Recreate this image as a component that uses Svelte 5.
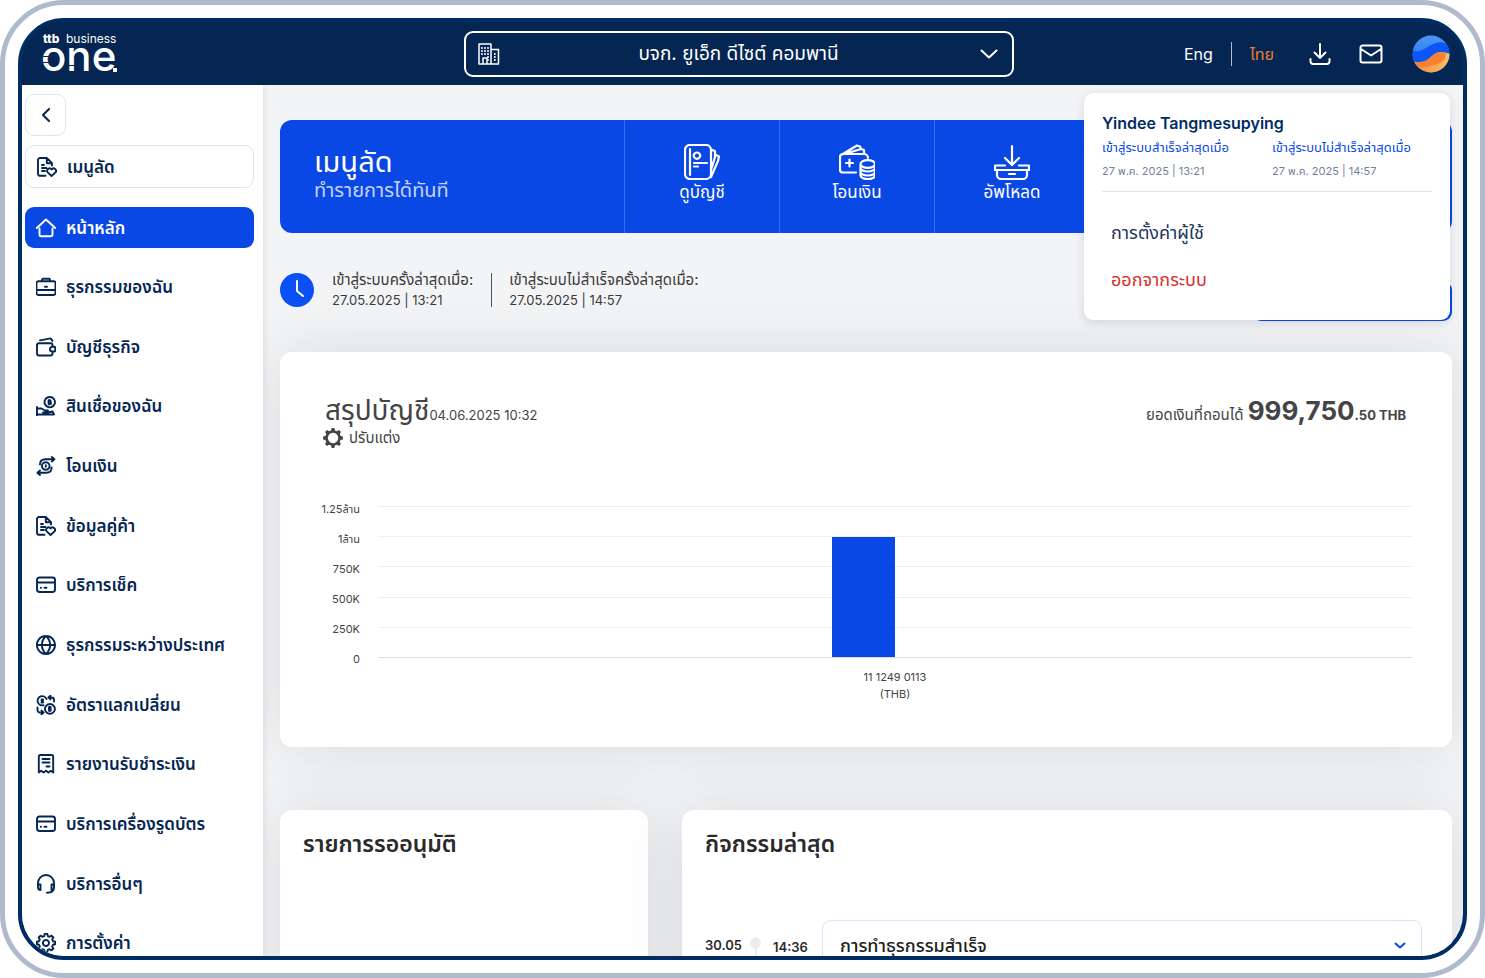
<script lang="ts">
  type MenuItem = { icon: string; label: string };

  // Outline of a cog: alternates between two radii around the centre.
  function cog(c: number, outer: number, inner: number, teeth: number): string {
    const step = (Math.PI * 2) / teeth;
    let d = "";
    for (let i = 0; i < teeth; i++) {
      const a = i * step - Math.PI / 2;
      const points = [
        [a - step * 0.32, inner],
        [a - step * 0.18, outer],
        [a + step * 0.18, outer],
        [a + step * 0.32, inner],
      ];
      for (const [angle, r] of points) {
        const x = (c + Math.cos(angle) * r).toFixed(2);
        const y = (c + Math.sin(angle) * r).toFixed(2);
        d += `${d ? "L" : "M"}${x} ${y}`;
      }
    }
    return d + "Z";
  }

  // 20x20 stroke icons.
  const icons: Record<string, string> = {
    partner:
      "M8.5 18.8H3A2 2 0 0 1 1 16.8V3A2 2 0 0 1 3 1H9.8L15 6.2V8.5M9.8 1V6.2H15M5 8H7M5 11H9.5M5 14H8M14.6 19l-3.9-3.6a2.3 2.3 0 0 1 3.9-3 2.3 2.3 0 0 1 3.9 3Z",
    home: "M.8 10 10 1.5 19.2 10M3.5 10.5V16.8A1.5 1.5 0 0 0 5 18.3H15A1.5 1.5 0 0 0 16.5 16.8V10.5",
    briefcase:
      "M2.5 4.2H17.5A2 2 0 0 1 19.5 6.2V16A2 2 0 0 1 17.5 18H2.5A2 2 0 0 1 .5 16V6.2A2 2 0 0 1 2.5 4.2ZM.5 13H19.5M6 4.2V2.8A1 1 0 0 1 7 1.8H13A1 1 0 0 1 14 2.8V4.2M9 9.7H11",
    wallet:
      "M16.5 9.5V8.2A2 2 0 0 0 14.5 6.2H3A2 2 0 0 0 1 8.2V16.5A2 2 0 0 0 3 18.5H14.5A2 2 0 0 0 16.5 16.5V15M16.3 9.8A2.3 2.3 0 0 0 16.3 14.5H18.2A1 1 0 0 0 19.2 13.5V10.8A1 1 0 0 0 18.2 9.8ZM4 3.4 14.5 1.4 16.2 3.4V4",
    loan: "M13.8 1A5.2 5.2 0 1 1 13.7 1ZM12.6 4.2V8.2M12.6 4.2H14A1 1 0 0 1 14 6.1H12.8M14 6.1A1 1 0 0 1 14 8.2H12.6M1 11V19.5M1 12.5H5.5L9 14.5H12M7 16.5H12L16.5 15.5 18 18.5H1",
    transfer:
      "M9.8 6.2A3.8 3.8 0 1 1 9.7 6.2ZM9.8 9.2V10.8M4 8.5C4 5 6.5 3.2 9.5 3.2H18M15.8 1 18.4 3.2 15.8 5.4M15.6 11.5C15.6 15 13.1 16.8 10.1 16.8H1.5M4 14.6 1.4 16.8 4 19",
    card: "M3.5 2.5H16.5A2.5 2.5 0 0 1 19 5V14.5A2.5 2.5 0 0 1 16.5 17H3.5A2.5 2.5 0 0 1 1 14.5V5A2.5 2.5 0 0 1 3.5 2.5ZM1 7.5H19M4.8 12.8H5M8.5 12.8H10.5",
    globe:
      "M10 1A9 9 0 1 1 9.9 1ZM1 10H19M10 1C4.5 6 4.5 14 10 19M10 1C15.5 6 15.5 14 10 19",
    exchange:
      "M7.5 10.2A4.6 4.6 0 1 1 10.5 4M14 9A4.9 4.9 0 1 1 13.9 9ZM12.5 2.5H15.5A2.5 2.5 0 0 1 18 5V6.5M14.5.6 12.4 2.5 14.5 4.4M7.5 17.5H4A2.5 2.5 0 0 1 1.5 15V12.5M5.5 15.6 7.6 17.5 5.5 19.4M7 4.4H5.6V6H7V7.6H5.4M13 12V15.9M13 12H14.6V14H13.5M14.6 14V15.9H13",
    receipt:
      "M2.8 18.5V2.5A1.5 1.5 0 0 1 4.3 1H15.7A1.5 1.5 0 0 1 17.2 2.5V18.5L14.8 16.8 12.4 18.5 10 16.8 7.600 18.5 5.2 16.8ZM6.5 5H13.5M6.5 8.5H13.5M10.5 12.5H13.5",
    headset:
      "M4.5 16A2.5 2.5 0 0 1 2 13.5V9A8 8 0 0 1 18 9V13.5A2.5 2.5 0 0 1 15.5 16V10.5H18M2 10.5H4.5V16M18 13.5C18 17 15.5 18.8 11 18.8",
    settings: cog(10, 9.2, 7.2, 8) + "M10 7A3 3 0 1 1 9.9 7Z",
  };

  const menu: MenuItem[] = [
    { icon: "home", label: "หน้าหลัก" },
    { icon: "briefcase", label: "ธุรกรรมของฉัน" },
    { icon: "wallet", label: "บัญชีธุรกิจ" },
    { icon: "loan", label: "สินเชื่อของฉัน" },
    { icon: "transfer", label: "โอนเงิน" },
    { icon: "partner", label: "ข้อมูลคู่ค้า" },
    { icon: "card", label: "บริการเช็ค" },
    { icon: "globe", label: "ธุรกรรมระหว่างประเทศ" },
    { icon: "exchange", label: "อัตราแลกเปลี่ยน" },
    { icon: "receipt", label: "รายงานรับชำระเงิน" },
    { icon: "card", label: "บริการเครื่องรูดบัตร" },
    { icon: "headset", label: "บริการอื่นๆ" },
    { icon: "settings", label: "การตั้งค่า" },
  ];

  // 36x36 stroke icons for the shortcut banner.
  const shortcuts = [
    {
      label: "ดูบัญชี",
      path: "M7 1H22A5 5 0 0 1 27 6V30A5 5 0 0 1 22 35H7A5 5 0 0 1 1 30V6A5 5 0 0 1 7 1ZM6 5V31M13 8.5A3.2 3.2 0 1 1 12.9 8.5ZM10 19H23M10 22.5H14M27 5.5 31 7 31 13 27 26M31 10.5 35 12.5 34 17 27 33",
    },
    {
      label: "โอนเงิน",
      path: "M17 28.5H4A3 3 0 0 1 1 25.5V13A3 3 0 0 1 4 10H25A4 4 0 0 1 29 14M3 10.5 18 1.5 21 2.5 22 5 7 9.5M22 5 25 6V9.5M10.5 15.5V22.5M7 19H14M21.500 20A7.200 3.800 0 0 1 36 20 7.200 3.800 0 0 1 21.500 20V31.500A7.200 3.500 0 0 0 36 31.500V20M21.500 24A7.200 3.500 0 0 0 36 24M21.500 28A7.200 3.500 0 0 0 36 28",
    },
    {
      label: "อัพโหลด",
      path: "M18 2V20M11 14 18 21 25 14M11 21.5H1V26H35V21.5H25M3 26V31A4 4 0 0 0 7 35H29A4 4 0 0 0 33 31V26M15 30H21",
    },
  ];

  const ticks = ["1.25ล้าน", "1ล้าน", "750K", "500K", "250K", "0"];
  const axisMax = 1250000;
  const account = { number: "11 1249 0113", currency: "THB", balance: 999750.5 };

  let lang = $state("th");
  let company = $state("บจก. ยูเอ็ก ดีไซต์ คอมพานี");
  let active = $state("หน้าหลัก");

  const barHeight = $derived((account.balance / axisMax) * 100);
</script>

{#snippet icon(name: string)}
  <svg class="icon" viewBox="0 0 20 20" aria-hidden="true">
    <path d={icons[name]} />
  </svg>
{/snippet}

<div class="device">
  <div class="screen">
    <header>
      <svg class="logo" viewBox="0 0 76 42" role="img" aria-label="ttb business one">
        <text class="ttb" x="0" y="10">ttb</text>
        <text class="business" x="23" y="10">business</text>
        <text class="one" x="-2" y="38">one</text>
        <path class="cut" d="M0 23H6V24H0ZM0 29H6V30H0ZM25 32H34V33H25Z" />
        <path class="dot" d="M70 35H74V39H70Z" />
      </svg>

      <div class="company">
        <svg class="building" viewBox="0 0 22 22" aria-hidden="true">
          <path d="M1 21V1H13V21ZM13 6.5H20.5V21H13M5 21V15H9V21" />
          <path class="windows" d="M4 4V13M7 4V13M10 4V18M16.800 10V19" />
        </svg>
        <select bind:value={company} aria-label="บริษัท">
          <option>บจก. ยูเอ็ก ดีไซต์ คอมพานี</option>
        </select>
        <svg class="caret" viewBox="0 0 18 10" aria-hidden="true"><path d="M1.5 1.5 9 8.5 16.5 1.5" /></svg>
      </div>

      <div class="tools">
        <button class="lang" class:current={lang === "en"} onclick={() => (lang = "en")}>Eng</button>
        <span class="bar"></span>
        <button class="lang" class:current={lang === "th"} onclick={() => (lang = "th")}>ไทย</button>
        <button class="tool download" aria-label="ดาวน์โหลด">
          <svg viewBox="0 0 22 22"><path d="M11 1V15M5.5 9.5 11 15 16.5 9.5M1.5 16V18.5A2.5 2.5 0 0 0 4 21H18A2.5 2.5 0 0 0 20.5 18.5V16" /></svg>
        </button>
        <button class="tool mail" aria-label="ข้อความ">
          <svg viewBox="0 0 24 20"><path d="M3.5 1.5H20.5A2 2 0 0 1 22.5 3.5V16.5A2 2 0 0 1 20.5 18.5H3.5A2 2 0 0 1 1.5 16.5V3.5A2 2 0 0 1 3.5 1.5ZM2 5 12 11.5 22 5" /></svg>
        </button>
        <button class="tool avatar" aria-label="โปรไฟล์">
          <svg viewBox="0 0 38 38">
            <defs>
              <linearGradient id="sky" x1="0" y1="0" x2="0" y2="1">
                <stop offset="0" stop-color="#4c9af5" />
                <stop offset="1" stop-color="#1a62f5" />
              </linearGradient>
              <linearGradient id="sand" x1="0" y1="0" x2="1" y2="0">
                <stop offset="0" stop-color="#f58a35" />
                <stop offset="1" stop-color="#fbc065" />
              </linearGradient>
              <clipPath id="disc"><circle cx="19" cy="19" r="18.500" /></clipPath>
            </defs>
            <g clip-path="url(#disc)">
              <rect width="38" height="38" fill="url(#sky)" />
              <path d="M0 15C7 19 13 13 19 10S32 5 38 12V40H0Z" fill="#0c55f7" />
              <path d="M0 26C9 29 15 26 20 21S30 16 38 19V40H0Z" fill="url(#sand)" />
              <path d="M0 26C9 29 15 26 20 21S29 17 34 18.500C34 27 26 29 19 31S6 34 0 26Z" fill="#f58233" />
            </g>
          </svg>
        </button>
      </div>

      <section class="profile">
        <h2>Yindee Tangmesupying</h2>
        <dl>
          <div><dt>เข้าสู่ระบบสำเร็จล่าสุดเมื่อ</dt><dd>27 พ.ค. 2025 | 13:21</dd></div>
          <div><dt>เข้าสู่ระบบไม่สำเร็จล่าสุดเมื่อ</dt><dd>27 พ.ค. 2025 | 14:57</dd></div>
        </dl>
        <a href="#settings">การตั้งค่าผู้ใช้</a>
        <a class="logout" href="#logout">ออกจากระบบ</a>
      </section>
    </header>

    <div class="body">
      <aside>
        <button class="back" aria-label="ย่อเมนู">
          <svg viewBox="0 0 10 14"><path d="M8 1 2 7 8 13" /></svg>
        </button>
        <a class="item shortcut" href="#shortcut">{@render icon("partner")}เมนูลัด</a>
        <nav>
          {#each menu as item}
            <a
              class="item"
              class:active={active === item.label}
              href="#menu"
              onclick={() => (active = item.label)}
            >
              {@render icon(item.icon)}{item.label}
            </a>
          {/each}
        </nav>
      </aside>

      <main>
        <section class="banner">
          <div class="intro">
            <h1>เมนูลัด</h1>
            <p>ทำรายการได้ทันที</p>
          </div>
          {#each shortcuts as s}
            <button>
              <svg viewBox="0 0 36 36" aria-hidden="true"><path d={s.path} /></svg>
              {s.label}
            </button>
          {/each}
          <div class="rest"></div>
        </section>

        <div class="logins">
          <svg class="clock" viewBox="0 0 34 34" aria-hidden="true">
            <circle cx="17" cy="17" r="17" />
            <path d="M17 8V18L23 23" />
          </svg>
          <p>เข้าสู่ระบบครั้งล่าสุดเมื่อ: <time>27.05.2025 | 13:21</time></p>
          <p class="failed">เข้าสู่ระบบไม่สำเร็จครั้งล่าสุดเมื่อ: <time>27.05.2025 | 14:57</time></p>
          <button class="primary" aria-label="เพิ่มเติม"></button>
        </div>

        <section class="card summary">
          <div class="heading">
            <div>
              <h2>สรุปบัญชี<small>04.06.2025 10:32</small></h2>
              <button class="customize">
                <svg viewBox="0 0 20 20" aria-hidden="true">
                  <path d={cog(10, 10, 7.8, 8) + "M10 4.8A5.2 5.2 0 1 0 10.1 4.8Z"} />
                </svg>
                ปรับแต่ง
              </button>
            </div>
            <p class="balance">ยอดเงินที่ถอนได้ <strong>999,750</strong><b>.50 THB</b></p>
          </div>

          <div class="chart">
            <div class="axis">
              {#each ticks as tick}<span>{tick}</span>{/each}
            </div>
            <div class="plot">
              <div class="bar-fill" style="height: calc({barHeight}% - 2px)"></div>
              {#each ticks as tick}<i></i>{/each}
            </div>
            <p class="account">{account.number}<br />({account.currency})</p>
          </div>
        </section>

        <div class="columns">
          <section class="card">
            <h3>รายการรออนุมัติ</h3>
          </section>
          <section class="card">
            <h3>กิจกรรมล่าสุด</h3>
            <div class="activity">
              <time class="date">30.05</time>
              <span class="pin"></span>
              <time class="hour">14:36</time>
              <button>
                การทำธุรกรรมสำเร็จ
                <svg viewBox="0 0 12 8" aria-hidden="true"><path d="M1.5 1.5 6 5.5 10.5 1.5" /></svg>
              </button>
            </div>
          </section>
        </div>
      </main>
    </div>
  </div>
</div>

<style>
  :global(body) {
    background: #fff;
  }
  .device,
  .device :global(*) {
    box-sizing: border-box;
  }
  .device {
    height: 100vh;
    padding: 13px;
    border: 5px solid #afbbcd;
    border-radius: 64px;
    font-family: Inter, "Noto Sans Thai", "Noto Sans", sans-serif;
    color: #052653;
  }
  .screen {
    display: flex;
    flex-direction: column;
    height: 100%;
    border: 4px solid #002d63;
    border-radius: 46px;
    background: #052653;
    overflow: hidden;
  }
  h1,
  h2,
  h3,
  p,
  dl,
  dd {
    margin: 0;
  }
  button,
  select {
    padding: 0;
    border: 0;
    background: none;
    font: inherit;
    color: inherit;
    cursor: pointer;
  }
  a {
    color: inherit;
    text-decoration: none;
  }
  svg {
    display: block;
    flex: none;
    fill: none;
    stroke: currentColor;
    stroke-linecap: round;
    stroke-linejoin: round;
  }

  header {
    position: relative;
    z-index: 2;
    flex: none;
    display: grid;
    grid-template-columns: 1fr 550px 1fr;
    align-items: center;
    height: 63px;
    padding: 0 13px 0 5px;
    background: #052653;
    color: #fff;
  }
  .logo {
    width: 76px;
    height: 42px;
    margin-left: 16px;
    overflow: visible;
    stroke: none;
    fill: #fff;
  }
  .ttb {
    font-size: 12px;
    font-weight: 800;
  }
  .business {
    font-size: 12px;
  }
  .one {
    font-size: 42px;
    font-weight: 500;
  }
  .cut {
    fill: #052653;
  }
  .company {
    position: relative;
    display: flex;
    align-items: center;
  }
  .company select {
    width: 100%;
    height: 46px;
    border: 2px solid #fff;
    border-radius: 9px;
    appearance: none;
    font-size: 19px;
    text-align: center;
    text-align-last: center;
  }
  .building,
  .caret {
    position: absolute;
    pointer-events: none;
  }
  .building {
    left: 14px;
    width: 22px;
    height: 22px;
    stroke-width: 1.5;
  }
  .windows {
    stroke-linecap: butt;
    stroke-dasharray: 2 1;
  }
  .caret {
    right: 16px;
    width: 18px;
    height: 10px;
    stroke-width: 2;
  }
  .tools {
    display: flex;
    justify-content: flex-end;
    align-items: center;
  }
  .lang {
    font-size: 16px;
    line-height: 24px;
  }
  .lang.current {
    color: #ee7f2e;
  }
  .bar {
    width: 1px;
    height: 24px;
    margin: 0 18px;
    background: #b4bccb;
  }
  .tool svg {
    width: 100%;
    height: 100%;
    stroke-width: 2;
  }
  .download {
    width: 22px;
    height: 22px;
    margin-left: 35px;
  }
  .mail {
    width: 24px;
    height: 20px;
    margin: 0 29px 0 28px;
  }
  .avatar {
    width: 38px;
    height: 38px;
  }
  .avatar svg {
    stroke: none;
  }

  .profile {
    position: absolute;
    top: 71px;
    right: 13px;
    width: 366px;
    height: 227px;
    padding: 18px;
    border-radius: 9px;
    background: #fff;
    box-shadow: 0 2px 10px rgba(5, 38, 83, 0.14);
    color: #1c3561;
  }
  .profile h2 {
    font-size: 16px;
    line-height: 24px;
    font-weight: 600;
    color: #002d63;
  }
  .profile dl {
    display: grid;
    grid-template-columns: 170px 1fr;
    padding-bottom: 8px;
    border-bottom: 1px solid #dfe3f3;
    font-size: 13px;
    line-height: 24px;
    white-space: nowrap;
  }
  .profile dt {
    color: #0a48e6;
  }
  .profile dd {
    font-size: 11px;
    color: #74809a;
  }
  .profile a {
    display: block;
    margin: 29px 0 0 9px;
    font-size: 18px;
    line-height: 24px;
  }
  .profile .logout {
    margin-top: 23px;
    color: #d62f2f;
  }

  .body {
    flex: 1;
    display: flex;
    min-height: 0;
    background: #f3f4f6;
  }
  aside {
    position: relative;
    z-index: 1;
    flex: none;
    display: flex;
    flex-direction: column;
    width: 241px;
    padding: 9px 9px 0 3px;
    background: #fff;
    box-shadow: 2px 0 6px rgba(30, 50, 60, 0.08);
  }
  .back {
    display: grid;
    place-items: center;
    width: 41px;
    height: 42px;
    border: 1px solid #dfe5ec;
    border-radius: 9px;
  }
  .back svg {
    width: 10px;
    height: 14px;
    stroke-width: 2;
  }
  .item {
    display: flex;
    align-items: center;
    gap: 10px;
    height: 41px;
    padding-left: 11px;
    border-radius: 9px;
    font-size: 17px;
    line-height: 24px;
    font-weight: 600;
    white-space: nowrap;
  }
  .icon {
    width: 20px;
    height: 20px;
    stroke-width: 1.9;
  }
  .shortcut {
    flex: none;
    height: 43px;
    margin: 9px 0 19px;
    border: 1px solid #dfe5ec;
  }
  .active {
    background: #0a48e6;
    color: #fff;
  }
  nav {
    flex: 1;
    display: flex;
    flex-direction: column;
    justify-content: space-between;
    margin-bottom: -8px;
  }

  main {
    flex: 1;
    min-width: 0;
    padding: 35px 11px 0 17px;
    overflow: hidden;
  }
  .banner {
    display: grid;
    grid-template-columns: 344px repeat(3, 155px) 1fr;
    height: 113px;
    border-radius: 12px;
    background: #0a48e6;
    color: #fff;
  }
  .intro {
    padding: 24px 34px;
  }
  .intro h1 {
    font-size: 29px;
    line-height: 36px;
    font-weight: 400;
  }
  .intro p {
    font-size: 20px;
    line-height: 20px;
    color: #c4d3fa;
  }
  .banner button,
  .rest {
    border-left: 1px solid #386cf0;
  }
  .banner button {
    display: flex;
    flex-direction: column;
    align-items: center;
    padding-top: 24px;
    font-size: 17px;
    line-height: 24px;
  }
  .banner svg {
    width: 36px;
    height: 36px;
    stroke-width: 2.2;
  }
  .logins {
    display: flex;
    height: 48px;
    margin: 40px 0 31px;
    font-size: 15px;
    line-height: 20px;
    color: #3a3a3c;
  }
  .logins p {
    margin-top: -3px;
    padding-left: 18px;
    white-space: nowrap;
  }
  .logins time {
    display: block;
    font-size: 13px;
  }
  .logins .failed {
    position: relative;
    margin-left: 18px;
  }
  .failed::before {
    content: "";
    position: absolute;
    left: 0;
    top: 3px;
    width: 1px;
    height: 34px;
    background: #55565a;
  }
  .clock {
    width: 34px;
    height: 34px;
    stroke-width: 2;
  }
  .clock circle {
    fill: #0a50f5;
    stroke: none;
  }
  .clock path {
    stroke: #fff;
  }
  .primary {
    width: 200px;
    height: 40px;
    margin: 8px 0 0 auto;
    border-radius: 9px;
    background: #0a48e6;
  }

  .card {
    border-radius: 12px;
    background: #fff;
    box-shadow: 0 0 60px rgba(40, 50, 60, 0.12);
  }
  .summary {
    height: 395px;
    padding: 41px 40px 0;
    color: #434446;
  }
  .heading {
    display: flex;
    justify-content: space-between;
    align-items: flex-start;
    height: 113px;
    padding: 0 6px 0 5px;
  }
  .heading h2 {
    height: 35px;
    font-size: 28px;
    line-height: 34px;
    font-weight: 400;
  }
  .heading small {
    font-size: 13px;
  }
  .customize {
    display: flex;
    align-items: center;
    gap: 6px;
    margin-left: -2px;
    font-size: 15px;
    line-height: 20px;
  }
  .customize svg {
    width: 20px;
    height: 20px;
    fill: currentColor;
    fill-rule: evenodd;
    stroke: none;
  }
  .balance {
    font-size: 15px;
    line-height: 36px;
    white-space: nowrap;
  }
  .balance strong {
    font-size: 26px;
    font-weight: 700;
  }
  .balance b {
    font-size: 13px;
    font-weight: 700;
  }
  .chart {
    display: grid;
    grid-template-columns: 40px 1fr;
    column-gap: 18px;
  }
  .axis,
  .plot {
    display: flex;
    flex-direction: column;
    justify-content: space-between;
    height: 152px;
  }
  .axis {
    height: 166px;
    margin: -5px 0 -9px;
    align-items: flex-end;
    font-size: 11px;
    line-height: 16px;
    white-space: nowrap;
  }
  .plot {
    position: relative;
  }
  .plot i {
    position: relative;
    height: 1px;
    background: rgba(30, 30, 40, 0.07);
  }
  .plot i:last-child {
    background: #dcdde0;
  }
  .bar-fill {
    position: absolute;
    right: 50%;
    bottom: 1px;
    width: 63px;
    background: #0a48e6;
  }
  .account {
    grid-column: 2;
    margin-top: 11px;
    font-size: 11px;
    line-height: 17px;
    text-align: center;
  }

  .columns {
    display: grid;
    grid-template-columns: 368px 1fr;
    gap: 34px;
    margin-top: 63px;
  }
  .columns .card {
    height: 220px;
    padding: 18px 30px 0 23px;
    color: #2a2a2c;
  }
  h3 {
    font-size: 23px;
    line-height: 32px;
    font-weight: 600;
  }
  .activity {
    display: flex;
    align-items: flex-start;
    margin-top: 60px;
    font-size: 13px;
    line-height: 20px;
    font-weight: 600;
  }
  .date,
  .hour {
    flex: none;
    width: 36px;
  }
  .date {
    margin-top: 15px;
  }
  .hour {
    margin-top: 17px;
  }
  .pin {
    width: 11px;
    height: 90px;
    margin: 17px 12px 0 9px;
    background:
      radial-gradient(circle at 50% 6px, #ececec 5px, transparent 6px),
      linear-gradient(#ececec, #ececec) center / 2px 100% no-repeat;
  }
  .activity button {
    flex: 1;
    display: flex;
    justify-content: space-between;
    align-items: center;
    height: 52px;
    margin-left: 13px;
    padding: 0 15px 0 17px;
    border: 1px solid #d6e5fb;
    border-radius: 9px;
    font-size: 18px;
    font-weight: 500;
    color: #1e1e20;
  }
  .activity svg {
    width: 12px;
    height: 8px;
    stroke: #0a48e6;
    stroke-width: 2;
  }
</style>
